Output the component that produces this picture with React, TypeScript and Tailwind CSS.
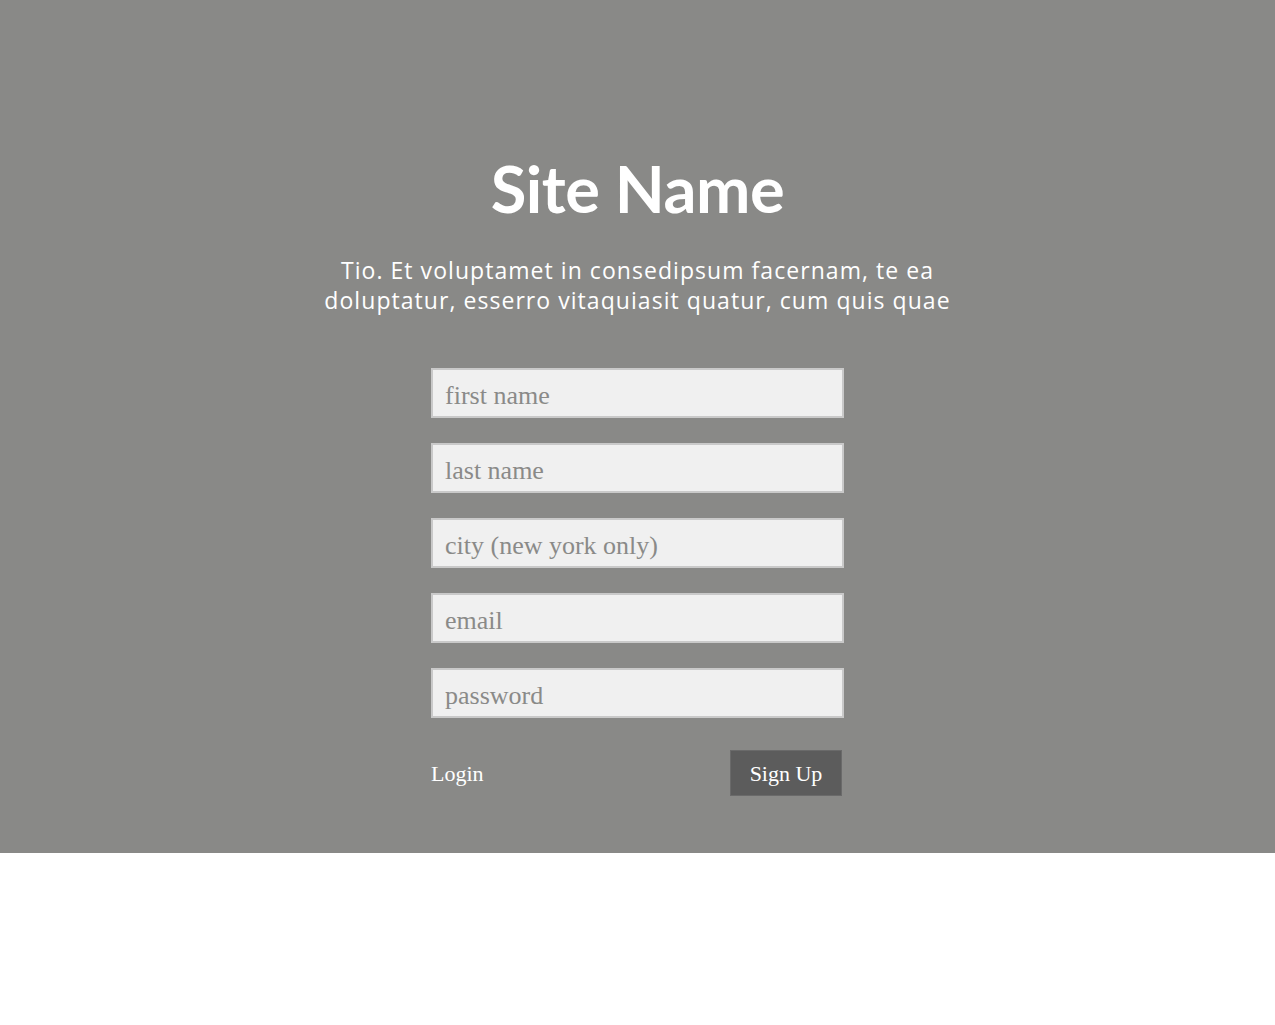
import React from 'react';

const fields = ['first name', 'last name', 'city (new york only)', 'email', 'password'];

const App: React.FC = () => {
  return (
    <div className="min-h-[1025px] bg-white">
      <section className="h-[853px] bg-[#898987] flex flex-col items-center pt-[149px]">
        <h1 className="font-['Lato',sans-serif] font-bold text-[65px] leading-[78px] text-white tracking-[-0.5px]">
          Site Name
        </h1>
        <p className="mt-[28px] text-center font-['Open_Sans',sans-serif] text-[23px] leading-[30px] text-white tracking-[1.05px]">
          Tio. Et voluptamet in consedipsum facernam, te ea
          <br />
          doluptatur, esserro vitaquiasit quatur, cum quis quae
        </p>
        <form className="mt-[53px] w-[413px] flex flex-col gap-[25px]" onSubmit={(e) => e.preventDefault()}>
          {fields.map((f) => (
            <input
              key={f}
              type={f === 'password' ? 'password' : 'text'}
              placeholder={f}
              className="h-[50px] w-full border-2 border-[#c9c9c9] bg-[#f0f0f0] px-[12px] pt-[5px] font-['Liberation_Serif',serif] text-[26px] text-[#666] placeholder:text-[#8a8a88] outline-none"
            />
          ))}
          <div className="mt-[7px] flex items-center justify-between pr-[2px]">
            <a href="#" className="font-['Liberation_Serif',serif] text-[22px] text-white">
              Login
            </a>
            <button
              type="submit"
              className="h-[46px] w-[112px] border border-[#6a6a6a] bg-[#5c5c5c] font-['Liberation_Serif',serif] text-[22px] text-white"
            >
              Sign Up
            </button>
          </div>
        </form>
      </section>
    </div>
  );
};

export default App;
